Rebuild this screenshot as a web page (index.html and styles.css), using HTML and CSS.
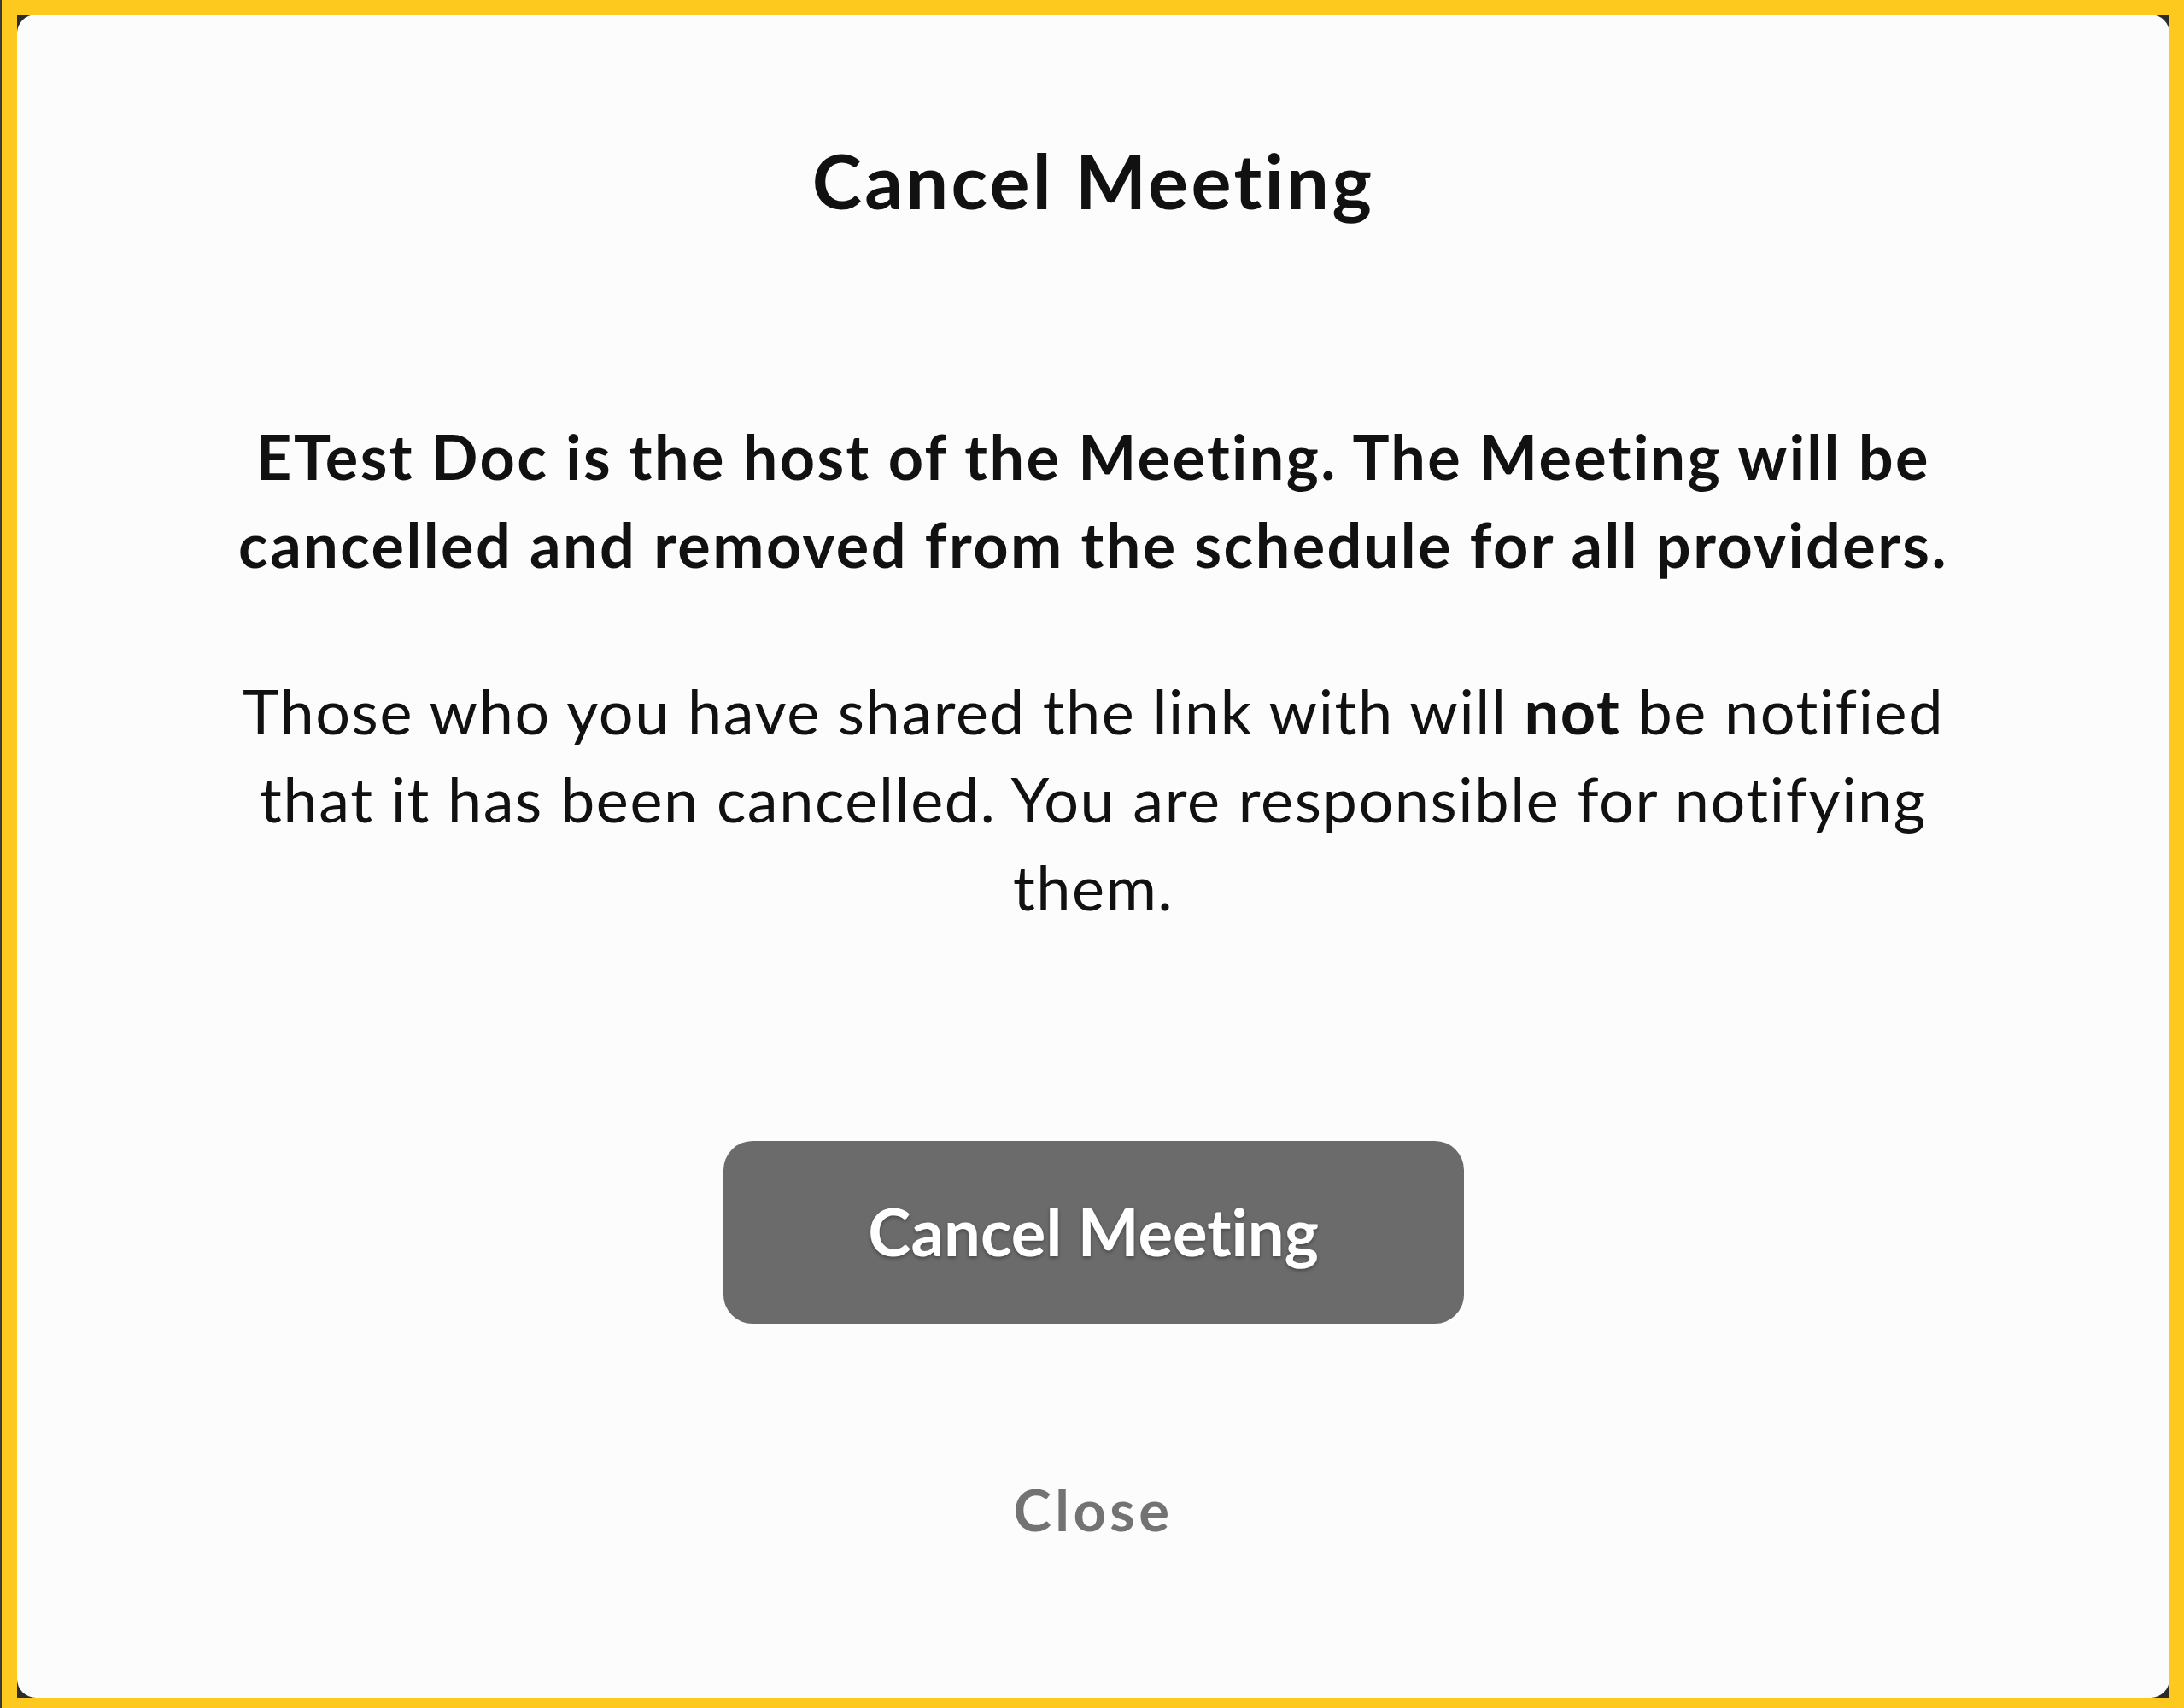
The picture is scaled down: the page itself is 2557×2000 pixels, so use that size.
FILE: index.html
```html
<!DOCTYPE html>
<html lang="en">
<head>
<meta charset="utf-8">
<title>Cancel Meeting</title>
<link rel="stylesheet" href="styles.css">
</head>
<body>
<div class="frame">
  <div class="card">
    <h1 class="title">Cancel Meeting</h1>
    <p class="lead">ETest Doc is the host of the Meeting. The Meeting will be<br>cancelled and removed from the schedule for all providers.</p>
    <p class="note">Those who you have shared the link with will <strong>not</strong> be notified<br>that it has been cancelled. You are responsible for notifying<br>them.</p>
    <button class="primary" type="button">Cancel Meeting</button>
    <button class="close" type="button">Close</button>
  </div>
</div>
</body>
</html>
```

FILE: styles.css
```css
html, body {
  margin: 0;
  padding: 0;
}

body {
  background: #3a3a3a;
  font-family: "Lato", "Noto Sans", sans-serif;
  font-variant-ligatures: none;
  color: #111111;
}

.frame {
  box-sizing: border-box;
  width: 2555px;
  height: 2000px;
  margin-left: 2px;
  border-style: solid;
  border-color: #fdc91f;
  border-width: 17px 17px 12px 18px;
  background: #2c2c2c;
  display: flex;
}

.card {
  flex: 1;
  background: #fcfcfc;
  border-radius: 22px;
  display: flex;
  flex-direction: column;
  align-items: center;
  padding-top: 150px;
}

.title {
  margin: 0;
  font-size: 88px;
  line-height: 88px;
  font-weight: 700;
  letter-spacing: 3.4px;
  color: #111111;
}

.lead {
  margin: 228px 0 0;
  font-size: 72px;
  line-height: 103px;
  font-weight: 700;
  letter-spacing: 2.4px;
  text-align: center;
}

.note {
  margin: 92px 0 0;
  font-size: 72px;
  line-height: 103px;
  font-weight: 400;
  letter-spacing: 1.6px;
  text-align: center;
}

.note strong {
  font-weight: 700;
}

.primary {
  margin-top: 246px;
  width: 867px;
  height: 214px;
  border: none;
  border-radius: 34px;
  background: #6b6b6b;
  color: #ffffff;
  font-family: inherit;
  font-variant-ligatures: none;
  font-size: 76px;
  font-weight: 700;
  text-shadow: 0 2px 4px rgba(0, 0, 0, 0.35);
  padding: 0 0 4px;
}

.close {
  margin-top: 184px;
  border: none;
  background: none;
  padding: 0;
  font-family: inherit;
  font-size: 67px;
  line-height: 66px;
  font-weight: 700;
  letter-spacing: 4.5px;
  color: #737373;
}
```
